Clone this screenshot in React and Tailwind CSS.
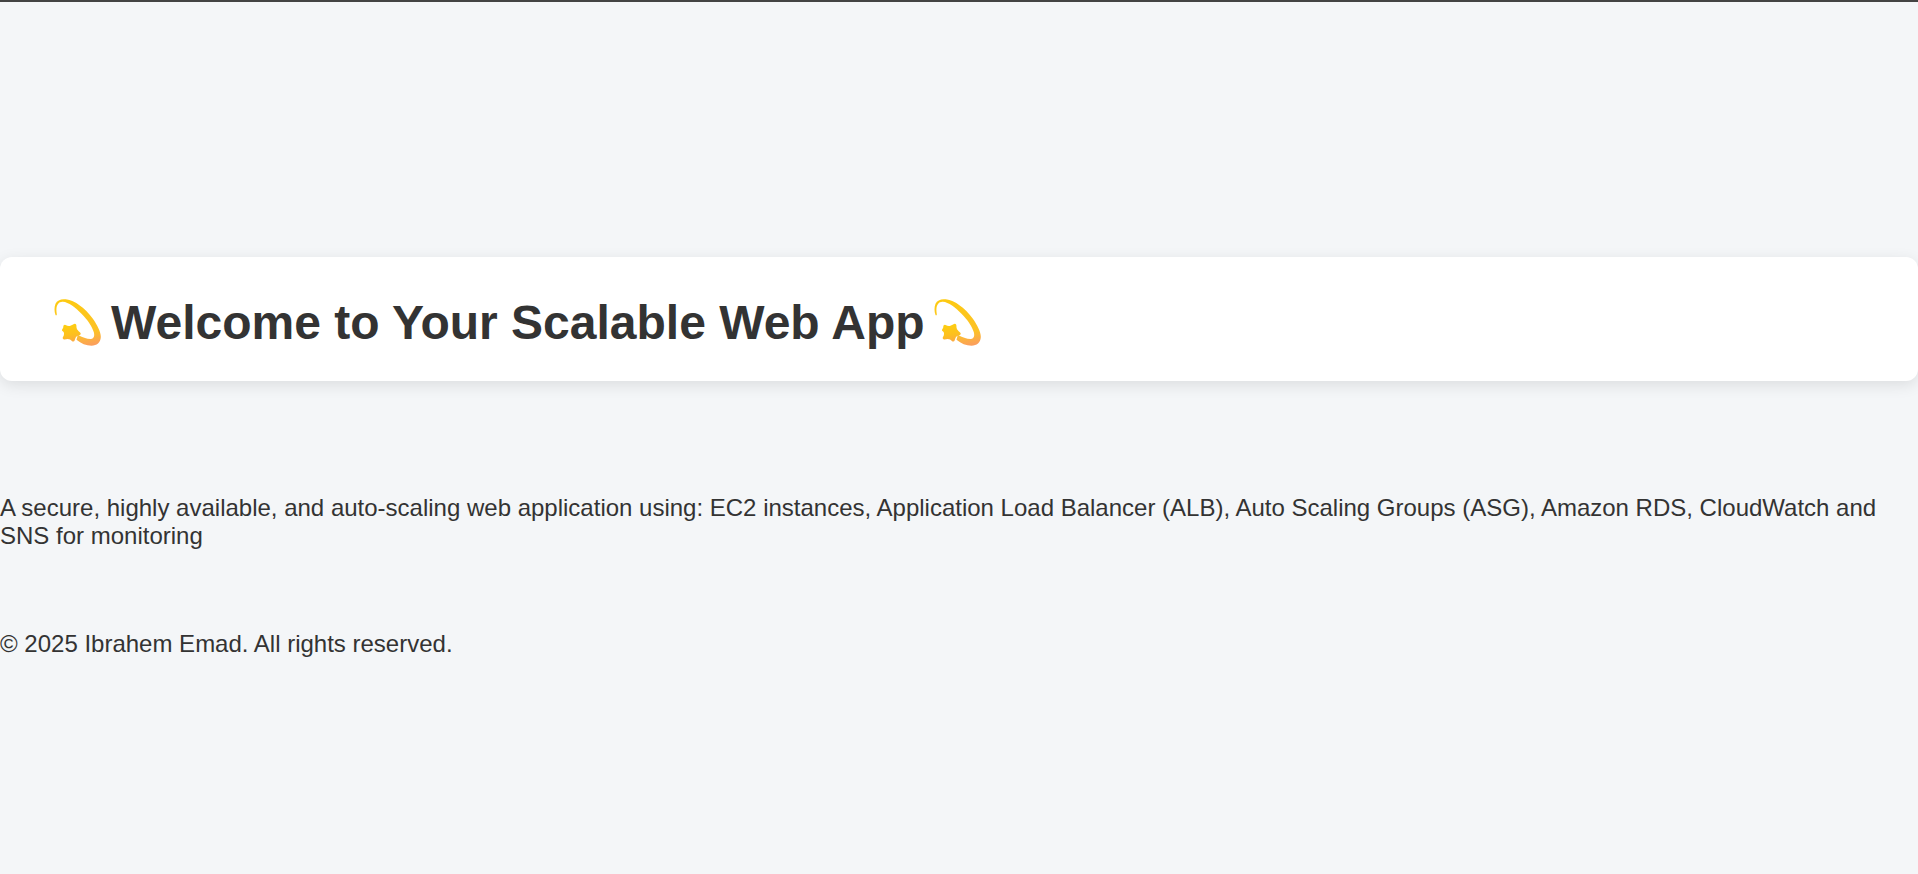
import { useId } from 'react';

function DizzyIcon() {
  const id = useId();
  return (
    <svg aria-hidden="true" viewBox="0 0 141 144" className="size-12 shrink-0">
      <defs>
        <linearGradient id={id + 'trail'} x1="50" y1="0" x2="80" y2="144" gradientUnits="userSpaceOnUse">
          <stop offset="0" stopColor="#fdca12" />
          <stop offset="0.75" stopColor="#fcc128" />
          <stop offset="1" stopColor="#fb9f5c" />
        </linearGradient>
        <linearGradient id={id + 'star'} x1="45" y1="75" x2="55" y2="128" gradientUnits="userSpaceOnUse">
          <stop offset="0" stopColor="#fdce10" />
          <stop offset="0.6" stopColor="#fdc01e" />
          <stop offset="1" stopColor="#fba943" />
        </linearGradient>
      </defs>
      <path
        fill={'url(#' + id + 'trail)'}
        d="M3 48C-1 38 -1 24 3 14C8 4 20 -1 34 1C62 5 91 27 114 58C129 79 139 100 139 114C138 131 127 140 111 140C95 140 80 133 66 122L70 107C82 114 97 120 108 120C118 119 121 112 118 100C113 83 101 64 81 44C63 25 42 9 25 8C14 7 7 16 6 28C5 36 7 43 7 46C7 50 4 50 3 48Z"
      />
      <path
        fill={'url(#' + id + 'star)'}
        stroke={'url(#' + id + 'star)'}
        strokeWidth="9"
        strokeLinejoin="round"
        d="M31 82Q40 87 47 85Q55 83 61 79Q61 88 64 93Q68 99 74 104Q65 107 61 111Q58 116 56 123Q50 118 44 116Q37 115 29 117Q34 109 33 102Q32 96 27 93Q31 90 31 82Z"
      />
    </svg>
  );
}

export default function App() {
  return (
    <div className="flex min-h-screen flex-col border-t-2 border-[#444] bg-[#f4f6f8] font-['Liberation_Sans',Arial,sans-serif] text-2xl leading-7 text-[#333]">
      <header className="mt-[255px] flex items-center rounded-xl bg-white px-[54px] pt-[38px] pb-[30px] shadow-[0_4px_15px_rgba(0,0,0,0.1)]">
        <h1 className="flex items-center gap-[9px] text-5xl leading-14 font-bold">
          <DizzyIcon />
          Welcome to Your Scalable Web App
          <DizzyIcon />
        </h1>
      </header>
      <main className="mt-[113px]">
        <p>
          A secure, highly available, and auto-scaling web application using: EC2 instances, Application Load
          Balancer (ALB), Auto Scaling Groups (ASG), Amazon RDS, CloudWatch and SNS for monitoring
        </p>
      </main>
      <footer className="mt-20">
        <p>© 2025 Ibrahem Emad. All rights reserved.</p>
      </footer>
    </div>
  );
}
